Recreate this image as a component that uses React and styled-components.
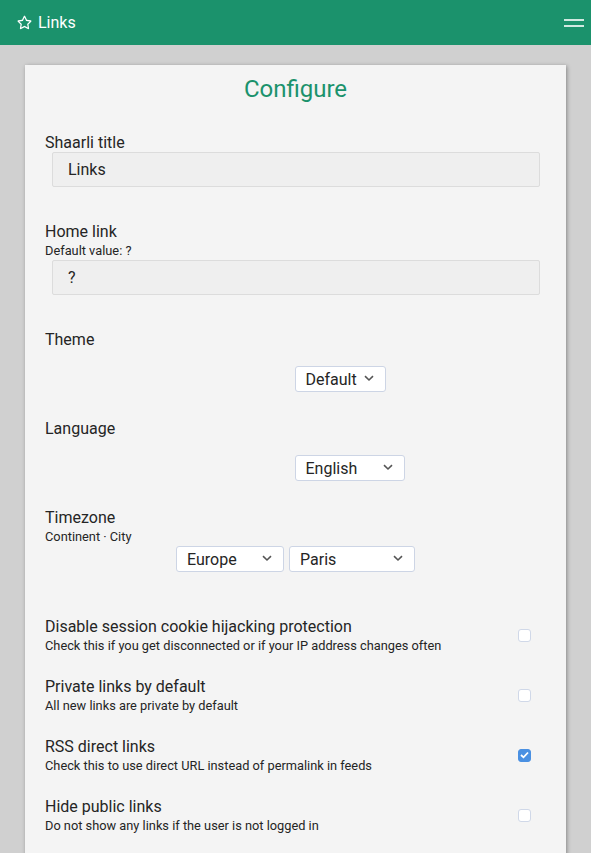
import styled, { createGlobalStyle } from 'styled-components'
import { FaRegStar } from 'react-icons/fa'

const GlobalStyle = createGlobalStyle`
  body {
    margin: 0;
    background: #d0d0d0;
    font-family: Roboto, "Liberation Sans", sans-serif;
    color: #252525;
  }
`

const Header = styled.header`
  height: 45px;
  background: #1b926c;
  display: flex;
  align-items: center;
  justify-content: space-between;
  padding: 0 7px 0 17px;
  box-sizing: border-box;
`

const Brand = styled.div`
  display: flex;
  align-items: center;
  gap: 6px;
  color: #fff;
  font-size: 16px;
  line-height: 20px;
`

const MenuButton = styled.div`
  width: 20px;
  display: flex;
  flex-direction: column;
  gap: 4px;

  span {
    display: block;
    height: 2px;
    background: rgba(255, 255, 255, 0.8);
  }
`

const Card = styled.main`
  margin: 20px 25px 0;
  background: #f4f4f4;
  box-shadow: 1px 1px 4px rgba(0, 0, 0, 0.35);
  padding: 10px 20px 40px;
`

const Title = styled.h2`
  margin: 0 0 29px;
  text-align: center;
  color: #1b926c;
  font-size: 24px;
  font-weight: 400;
  line-height: 28px;
`

const Section = styled.section`
  padding-bottom: ${props => props.$after}px;
`

const Label = styled.div`
  font-size: 16px;
  padding-top: 1px;
  line-height: 19px;
`

const SubLabel = styled.div`
  font-size: 12.8px;
  padding-top: 1px;
  line-height: ${props => props.$lh || 18}px;
`

const TextInput = styled.input`
  display: block;
  box-sizing: border-box;
  width: calc(100% - 13px);
  margin: 0 6px 0 7px;
  height: 35px;
  padding: 0 15px;
  border: 1px solid #dcdcdc;
  border-radius: 2px;
  background: #efefef;
  font-family: inherit;
  font-size: 16px;
  color: #252525;
  outline: none;
`

const SelectRow = styled.div`
  display: flex;
  gap: 5px;
  padding-top: ${props => props.$top || 0}px;
  justify-content: ${props => (props.$center ? 'center' : 'flex-start')};
  padding-left: ${props => (props.$center ? '0' : 'calc(50% - 1px)')};
`

const SelectWrap = styled.div`
  position: relative;
  width: ${props => props.$width}px;
`

const Select = styled.select`
  appearance: none;
  -webkit-appearance: none;
  box-sizing: border-box;
  width: 100%;
  height: 26px;
  padding: 0 24px 0 10px;
  border: 1px solid #cdd5e5;
  border-radius: 3px;
  background: #fff;
  font-family: inherit;
  font-size: 16px;
  color: #252525;
  outline: none;
`

const Chevron = styled.svg`
  position: absolute;
  right: 12px;
  top: 9px;
  width: 10px;
  height: 7px;
  pointer-events: none;
`

const CheckRow = styled.div`
  display: flex;
  align-items: center;
  justify-content: space-between;
  padding-right: 15px;
  padding-bottom: 22px;
`

const Box = styled.span`
  width: 13px;
  height: 13px;
  box-sizing: border-box;
  border-radius: 3px;
  border: 1px solid ${props => (props.$checked ? '#4a90e2' : '#d0d8e8')};
  background: ${props => (props.$checked ? '#4a90e2' : '#fff')};
  display: flex;
  align-items: center;
  justify-content: center;
`

function Dropdown({ width, value }) {
  return (
    <SelectWrap $width={width}>
      <Select defaultValue={value}>
        <option>{value}</option>
      </Select>
      <Chevron viewBox="0 0 10 7">
        <path d="M1 1.2 L5 5 L9 1.2" fill="none" stroke="#555" strokeWidth="1.6" />
      </Chevron>
    </SelectWrap>
  )
}

function Checkbox({ checked }) {
  return (
    <Box $checked={checked}>
      {checked && (
        <svg width="9" height="8" viewBox="0 0 9 8">
          <path d="M1 4 L3.5 6.3 L8 1.5" fill="none" stroke="#fff" strokeWidth="1.8" />
        </svg>
      )}
    </Box>
  )
}

const options = [
  {
    title: 'Disable session cookie hijacking protection',
    help: 'Check this if you get disconnected or if your IP address changes often',
    checked: false,
  },
  {
    title: 'Private links by default',
    help: 'All new links are private by default',
    checked: false,
  },
  {
    title: 'RSS direct links',
    help: 'Check this to use direct URL instead of permalink in feeds',
    checked: true,
  },
  {
    title: 'Hide public links',
    help: 'Do not show any links if the user is not logged in',
    checked: false,
  },
]

function App() {
  return (
    <>
      <GlobalStyle />
      <Header>
        <Brand>
          <FaRegStar size={15} />
          Links
        </Brand>
        <MenuButton>
          <span />
          <span />
        </MenuButton>
      </Header>

      <Card>
        <Title>Configure</Title>

        <Section $after={34}>
          <Label>Shaarli title</Label>
          <TextInput defaultValue="Links" />
        </Section>

        <Section $after={34}>
          <Label>Home link</Label>
          <SubLabel>Default value: ?</SubLabel>
          <TextInput defaultValue="?" />
        </Section>

        <Section $after={26}>
          <Label>Theme</Label>
          <SelectRow $top={17}>
            <Dropdown width={91} value="Default" />
          </SelectRow>
        </Section>

        <Section $after={26}>
          <Label>Language</Label>
          <SelectRow $top={17}>
            <Dropdown width={110} value="English" />
          </SelectRow>
        </Section>

        <Section $after={44}>
          <Label>Timezone</Label>
          <SubLabel>Continent · City</SubLabel>
          <SelectRow $center>
            <Dropdown width={108} value="Europe" />
            <Dropdown width={126} value="Paris" />
          </SelectRow>
        </Section>

        {options.map(option => (
          <CheckRow key={option.title}>
            <div>
              <Label>{option.title}</Label>
              <SubLabel $lh={17}>{option.help}</SubLabel>
            </div>
            <Checkbox checked={option.checked} />
          </CheckRow>
        ))}
      </Card>
    </>
  )
}

export default App
